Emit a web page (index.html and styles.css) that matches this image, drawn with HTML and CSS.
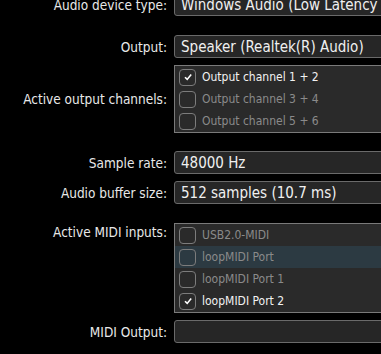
FILE: index.html
```html
<!DOCTYPE html>
<html>
<head>
<meta charset="utf-8">
<link rel="stylesheet" href="styles.css">
</head>
<body>
<div class="panel">
  <div class="label">Audio device type:</div>
  <div class="combo">Windows Audio (Low Latency Mode)</div>

  <div class="label g19">Output:</div>
  <div class="combo g19">Speaker (Realtek(R) Audio)</div>

  <div class="label g7">Active output channels:</div>
  <div class="list g7">
    <div class="item on"><span class="cb"><svg viewBox="0 0 10 10" width="10" height="10"><path d="M2 5.2 L4.2 7.4 L8.2 2.6" fill="none" stroke="#fff" stroke-width="1.6"/></svg></span>Output channel 1 + 2</div>
    <div class="item"><span class="cb"></span>Output channel 3 + 4</div>
    <div class="item"><span class="cb"></span>Output channel 5 + 6</div>
  </div>

  <div class="label g18">Sample rate:</div>
  <div class="combo g18">48000 Hz</div>

  <div class="label g7">Audio buffer size:</div>
  <div class="combo g7">512 samples (10.7 ms)</div>

  <div class="label top g19">Active MIDI inputs:</div>
  <div class="list g19">
    <div class="item"><span class="cb"></span>USB2.0-MIDI</div>
    <div class="item hl"><span class="cb"></span>loopMIDI Port</div>
    <div class="item"><span class="cb"></span>loopMIDI Port 1</div>
    <div class="item on"><span class="cb"><svg viewBox="0 0 10 10" width="10" height="10"><path d="M2 5.2 L4.2 7.4 L8.2 2.6" fill="none" stroke="#fff" stroke-width="1.6"/></svg></span>loopMIDI Port 2</div>
  </div>

  <div class="label g7">MIDI Output:</div>
  <div class="combo g7"></div>
</div>
</body>
</html>
```
FILE: styles.css
```css
html, body {
  margin: 0;
  padding: 0;
  background: #000;
  overflow: hidden;
  width: 381px;
  height: 354px;
}
body {
  font-family: "DejaVu Sans Condensed", "DejaVu Sans", Verdana, sans-serif;
  color: #e6e6e6;
}
.panel {
  display: grid;
  grid-template-columns: 167px 260px;
  column-gap: 7px;
  margin-top: -7px;
  align-items: center;
}
.label {
  font-size: 13.5px;
  text-align: right;
  color: #e8e8e8;
  align-self: center;
}
.label.top {
  align-self: start;
  padding-top: 1px;
}
.combo {
  box-sizing: border-box;
  height: 23px;
  background: #262626;
  border: 1px solid #6a6a6a;
  border-radius: 3px;
  font-size: 15px;
  line-height: 22px;
  padding-left: 6px;
  white-space: nowrap;
  overflow: hidden;
  color: #f0f0f0;
}
.g19 { margin-top: 19px; }
.g18 { margin-top: 18px; }
.g7 { margin-top: 7px; }
.list {
  background: #2a2a2a;
  border: 1px solid #7a7a7a;
}
.item {
  height: 22px;
  display: flex;
  align-items: center;
  font-size: 12px;
  color: #8a8a8a;
  white-space: nowrap;
}
.item.on { color: #f2f2f2; }
.item.hl { background: #2c3a42; }
.cb {
  box-sizing: border-box;
  width: 17px;
  height: 17px;
  border: 1px solid #7c7c7c;
  border-radius: 4px;
  margin-left: 4px;
  margin-right: 6px;
  display: flex;
  align-items: center;
  justify-content: center;
}
```
